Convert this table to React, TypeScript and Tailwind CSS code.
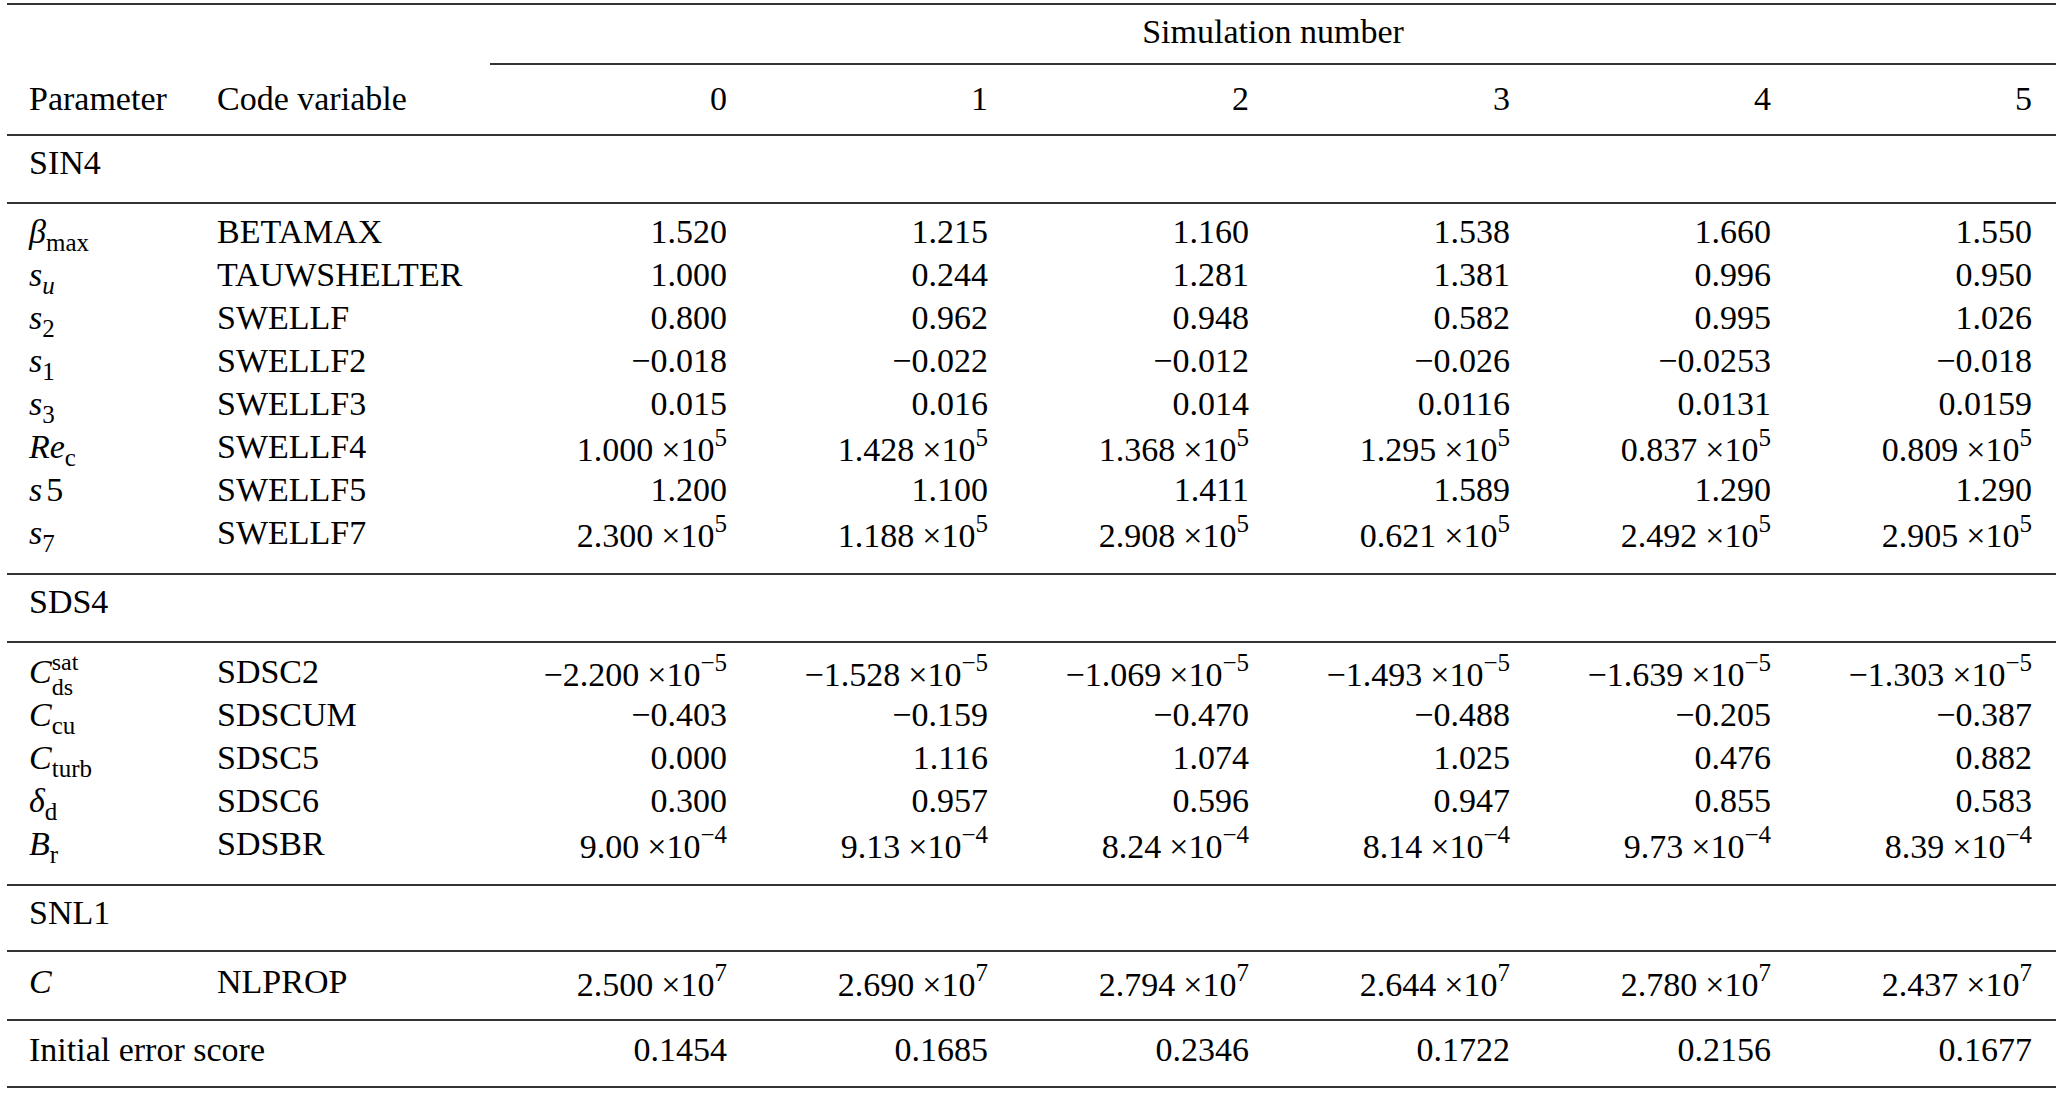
import React from "react";

type Row = { p: React.ReactNode; code: string; v: string[] };

const Sub = ({ children, italic }: { children: React.ReactNode; italic?: boolean }) => (
  <span className={`align-[-8px] text-[25px] leading-none ${italic ? "italic" : "not-italic"}`}>{children}</span>
);

// "1.000|5" -> 1.000 ×10^5
function Val({ s }: { s: string }) {
  if (!s.includes("|")) return <>{s}</>;
  const [m, e] = s.split("|");
  return (
    <>
      {m}
      <span className="ml-[8px]">×</span>10
      <span className="align-[15px] text-[25px] leading-none">{e}</span>
    </>
  );
}

const sin4: Row[] = [
  { p: <><i>β</i><Sub>max</Sub></>, code: "BETAMAX", v: ["1.520", "1.215", "1.160", "1.538", "1.660", "1.550"] },
  { p: <><i>s</i><Sub italic>u</Sub></>, code: "TAUWSHELTER", v: ["1.000", "0.244", "1.281", "1.381", "0.996", "0.950"] },
  { p: <><i>s</i><Sub>2</Sub></>, code: "SWELLF", v: ["0.800", "0.962", "0.948", "0.582", "0.995", "1.026"] },
  { p: <><i>s</i><Sub>1</Sub></>, code: "SWELLF2", v: ["−0.018", "−0.022", "−0.012", "−0.026", "−0.0253", "−0.018"] },
  { p: <><i>s</i><Sub>3</Sub></>, code: "SWELLF3", v: ["0.015", "0.016", "0.014", "0.0116", "0.0131", "0.0159"] },
  { p: <><i>Re</i><Sub>c</Sub></>, code: "SWELLF4", v: ["1.000|5", "1.428|5", "1.368|5", "1.295|5", "0.837|5", "0.809|5"] },
  { p: <><i>s</i><span className="ml-[4px]">5</span></>, code: "SWELLF5", v: ["1.200", "1.100", "1.411", "1.589", "1.290", "1.290"] },
  { p: <><i>s</i><Sub>7</Sub></>, code: "SWELLF7", v: ["2.300|5", "1.188|5", "2.908|5", "0.621|5", "2.492|5", "2.905|5"] },
];

const sds4: Row[] = [
  {
    p: (
      <>
        <i>C</i>
        <span className="inline-flex flex-col align-[13px] text-[24px] leading-[25px]">
          <span>sat</span>
          <span>ds</span>
        </span>
      </>
    ),
    code: "SDSC2",
    v: ["−2.200|−5", "−1.528|−5", "−1.069|−5", "−1.493|−5", "−1.639|−5", "−1.303|−5"],
  },
  { p: <><i>C</i><Sub>cu</Sub></>, code: "SDSCUM", v: ["−0.403", "−0.159", "−0.470", "−0.488", "−0.205", "−0.387"] },
  { p: <><i>C</i><Sub>turb</Sub></>, code: "SDSC5", v: ["0.000", "1.116", "1.074", "1.025", "0.476", "0.882"] },
  { p: <><i>δ</i><Sub>d</Sub></>, code: "SDSC6", v: ["0.300", "0.957", "0.596", "0.947", "0.855", "0.583"] },
  { p: <><i>B</i><Sub>r</Sub></>, code: "SDSBR", v: ["9.00|−4", "9.13|−4", "8.24|−4", "8.14|−4", "9.73|−4", "8.39|−4"] },
];

const snl1: Row[] = [
  { p: <i>C</i>, code: "NLPROP", v: ["2.500|7", "2.690|7", "2.794|7", "2.644|7", "2.780|7", "2.437|7"] },
];

const cols = "grid grid-cols-[188px_295px_repeat(6,261px)]";
const rule = "border-b-2 border-[#333]";

function DataRow({ r }: { r: Row }) {
  return (
    <div className={`${cols} h-[43px]`}>
      <div className="pl-[22px] whitespace-nowrap">{r.p}</div>
      <div className="pl-[22px] whitespace-nowrap">{r.code}</div>
      {r.v.map((x, i) => (
        <div key={i} className="pr-[24px] text-right whitespace-nowrap">
          <Val s={x} />
        </div>
      ))}
    </div>
  );
}

function Section({ title }: { title: string }) {
  return <div className={`${rule} h-[68px] pt-[5px] pl-[22px]`}>{title}</div>;
}

export default function App() {
  return (
    <div className="min-h-screen bg-white pt-[3px] pl-[7px] text-black font-['Liberation_Serif',serif] text-[34px] leading-[43px]">
      <div className="w-[2049px] border-t-2 border-[#333]">
        {/* super header */}
        <div className={`${cols} h-[60px]`}>
          <div className="col-span-2" />
          <div className={`col-span-6 ${rule} pt-[5px] text-center`}>Simulation number</div>
        </div>
        {/* column header */}
        <div className={`${cols} ${rule} h-[71px] pt-[12px]`}>
          <div className="pl-[22px]">Parameter</div>
          <div className="pl-[22px]">Code variable</div>
          {[0, 1, 2, 3, 4, 5].map((n) => (
            <div key={n} className="pr-[24px] text-right">{n}</div>
          ))}
        </div>

        <Section title="SIN4" />
        <div className={`${rule} h-[371px] pt-[6px]`}>
          {sin4.map((r) => <DataRow key={r.code} r={r} />)}
        </div>

        <Section title="SDS4" />
        <div className={`${rule} h-[243px] pt-[7px]`}>
          {sds4.map((r) => <DataRow key={r.code} r={r} />)}
        </div>

        <div className={`${rule} h-[66px] pt-[5px] pl-[22px]`}>SNL1</div>
        <div className={`${rule} h-[69px] pt-[8px]`}>
          {snl1.map((r) => <DataRow key={r.code} r={r} />)}
        </div>

        <div className={`${cols} ${rule} h-[67px] pt-[7px]`}>
          <div className="col-span-2 pl-[22px]">Initial error score</div>
          {["0.1454", "0.1685", "0.2346", "0.1722", "0.2156", "0.1677"].map((x) => (
            <div key={x} className="pr-[24px] text-right">{x}</div>
          ))}
        </div>
      </div>
    </div>
  );
}
